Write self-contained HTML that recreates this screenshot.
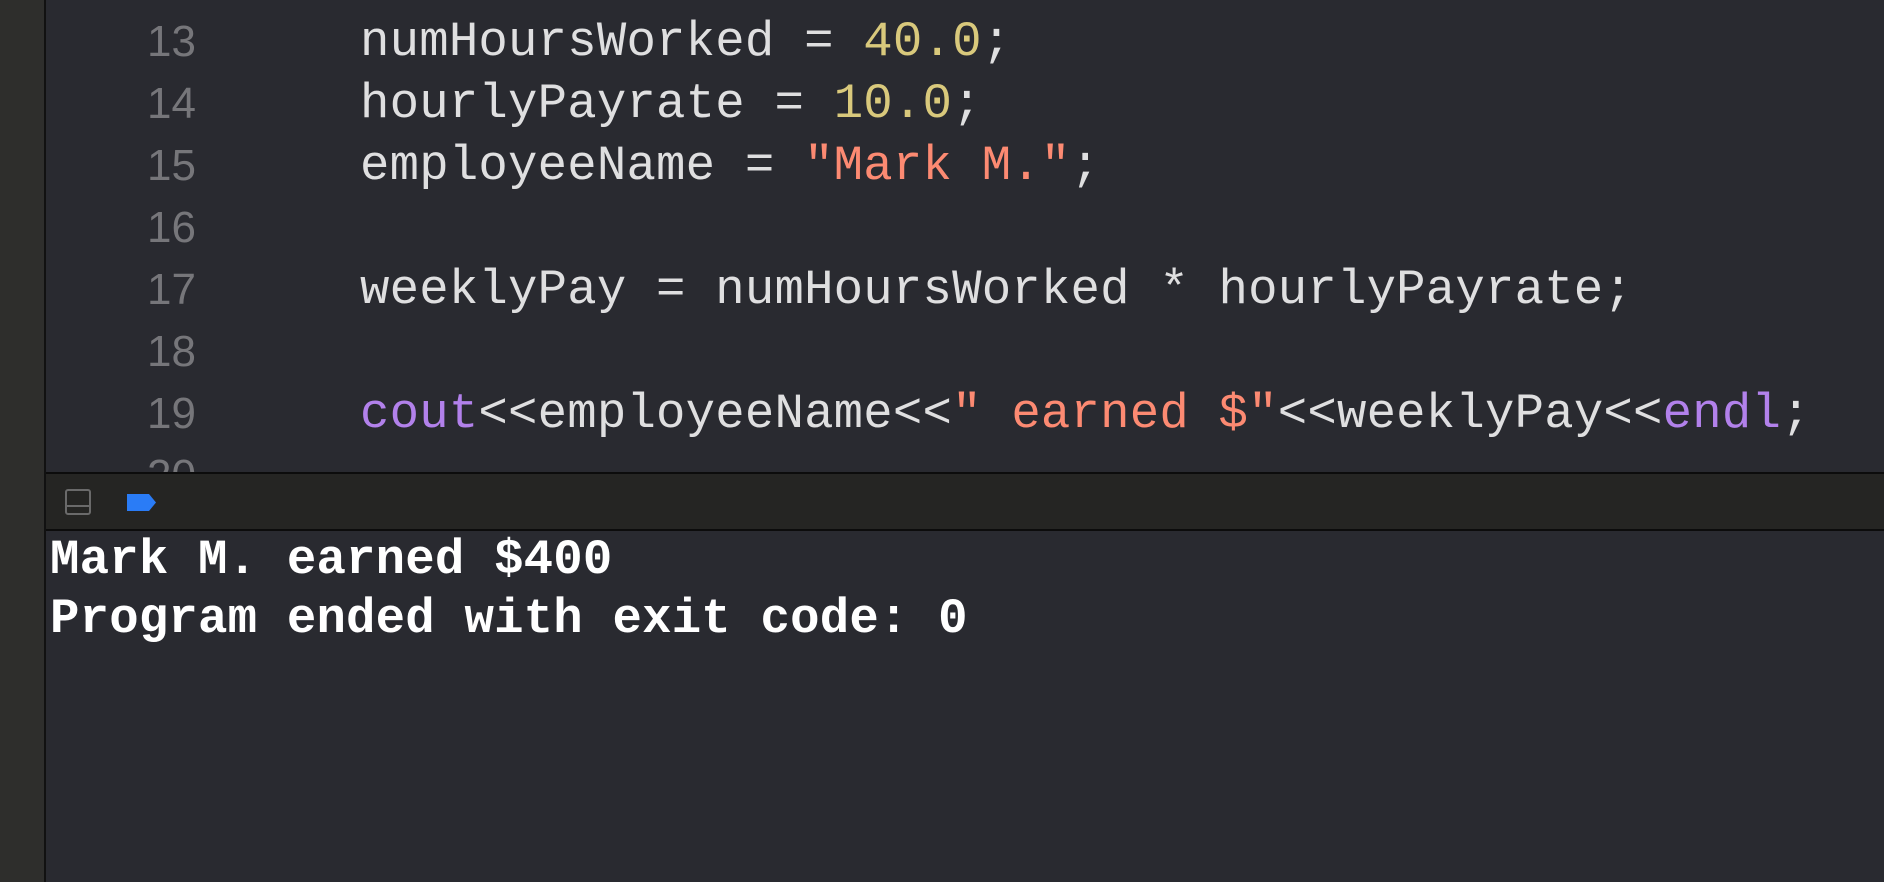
<!DOCTYPE html>
<html><head><style>
html,body{margin:0;padding:0;width:1884px;height:882px;overflow:hidden;background:#292a30;}
#side{position:absolute;left:0;top:0;width:44px;height:882px;background:#2e2e2c;border-right:2px solid #111;}
#ed{position:absolute;left:46px;top:0;right:0;height:472px;overflow:hidden;background:#292a30;}
.l{position:absolute;left:0;height:62px;line-height:62px;font-family:"Liberation Mono",monospace;font-size:49px;letter-spacing:0.2px;color:#dfdfe0;white-space:pre;}
.n{position:absolute;width:150px;text-align:right;color:#76767a;font-family:"Liberation Sans",sans-serif;font-size:44px;letter-spacing:0;}
.c{position:absolute;left:314px;}
.num{color:#d9c97c}.str{color:#fc8a72}.kw{color:#b281eb}
#div{position:absolute;left:46px;right:0;top:472px;height:2px;background:#0c0c0c;}
#tb{position:absolute;left:46px;right:0;top:474px;height:55px;background:#252523;}
#div2{position:absolute;left:46px;right:0;top:529px;height:2px;background:#0c0c0c;}
#con{position:absolute;left:50px;top:531px;font-family:"Liberation Mono",monospace;font-weight:bold;font-size:49px;letter-spacing:0.2px;line-height:59px;color:#fff;white-space:pre;}
</style></head><body>
<div id="side"></div>
<div id="ed">
<div class="l" style="top:11px"><span class="n">13</span><span class="c">numHoursWorked = <span class="num">40.0</span>;</span></div>
<div class="l" style="top:73px"><span class="n">14</span><span class="c">hourlyPayrate = <span class="num">10.0</span>;</span></div>
<div class="l" style="top:135px"><span class="n">15</span><span class="c">employeeName = <span class="str">"Mark M."</span>;</span></div>
<div class="l" style="top:197px"><span class="n">16</span></div>
<div class="l" style="top:259px"><span class="n">17</span><span class="c">weeklyPay = numHoursWorked * hourlyPayrate;</span></div>
<div class="l" style="top:321px"><span class="n">18</span></div>
<div class="l" style="top:383px"><span class="n">19</span><span class="c"><span class="kw">cout</span>&lt;&lt;employeeName&lt;&lt;<span class="str">" earned $"</span>&lt;&lt;weeklyPay&lt;&lt;<span class="kw">endl</span>;</span></div>
<div class="l" style="top:445px"><span class="n">20</span></div>
</div>
<div id="div"></div>
<div id="tb">
<svg width="1838" height="55" style="position:absolute;left:0;top:0">
<rect x="20" y="16" width="24" height="24" rx="2" fill="none" stroke="#6a6a6a" stroke-width="2"/>
<line x1="20" y1="32" x2="44" y2="32" stroke="#6a6a6a" stroke-width="2"/>
<path d="M81 20 H103 L110 28.5 L103 37 H81 Z" fill="#2a7cf6"/>
</svg>
</div>
<div id="div2"></div>
<div id="con">Mark M. earned $400
Program ended with exit code: 0</div>
</body></html>
